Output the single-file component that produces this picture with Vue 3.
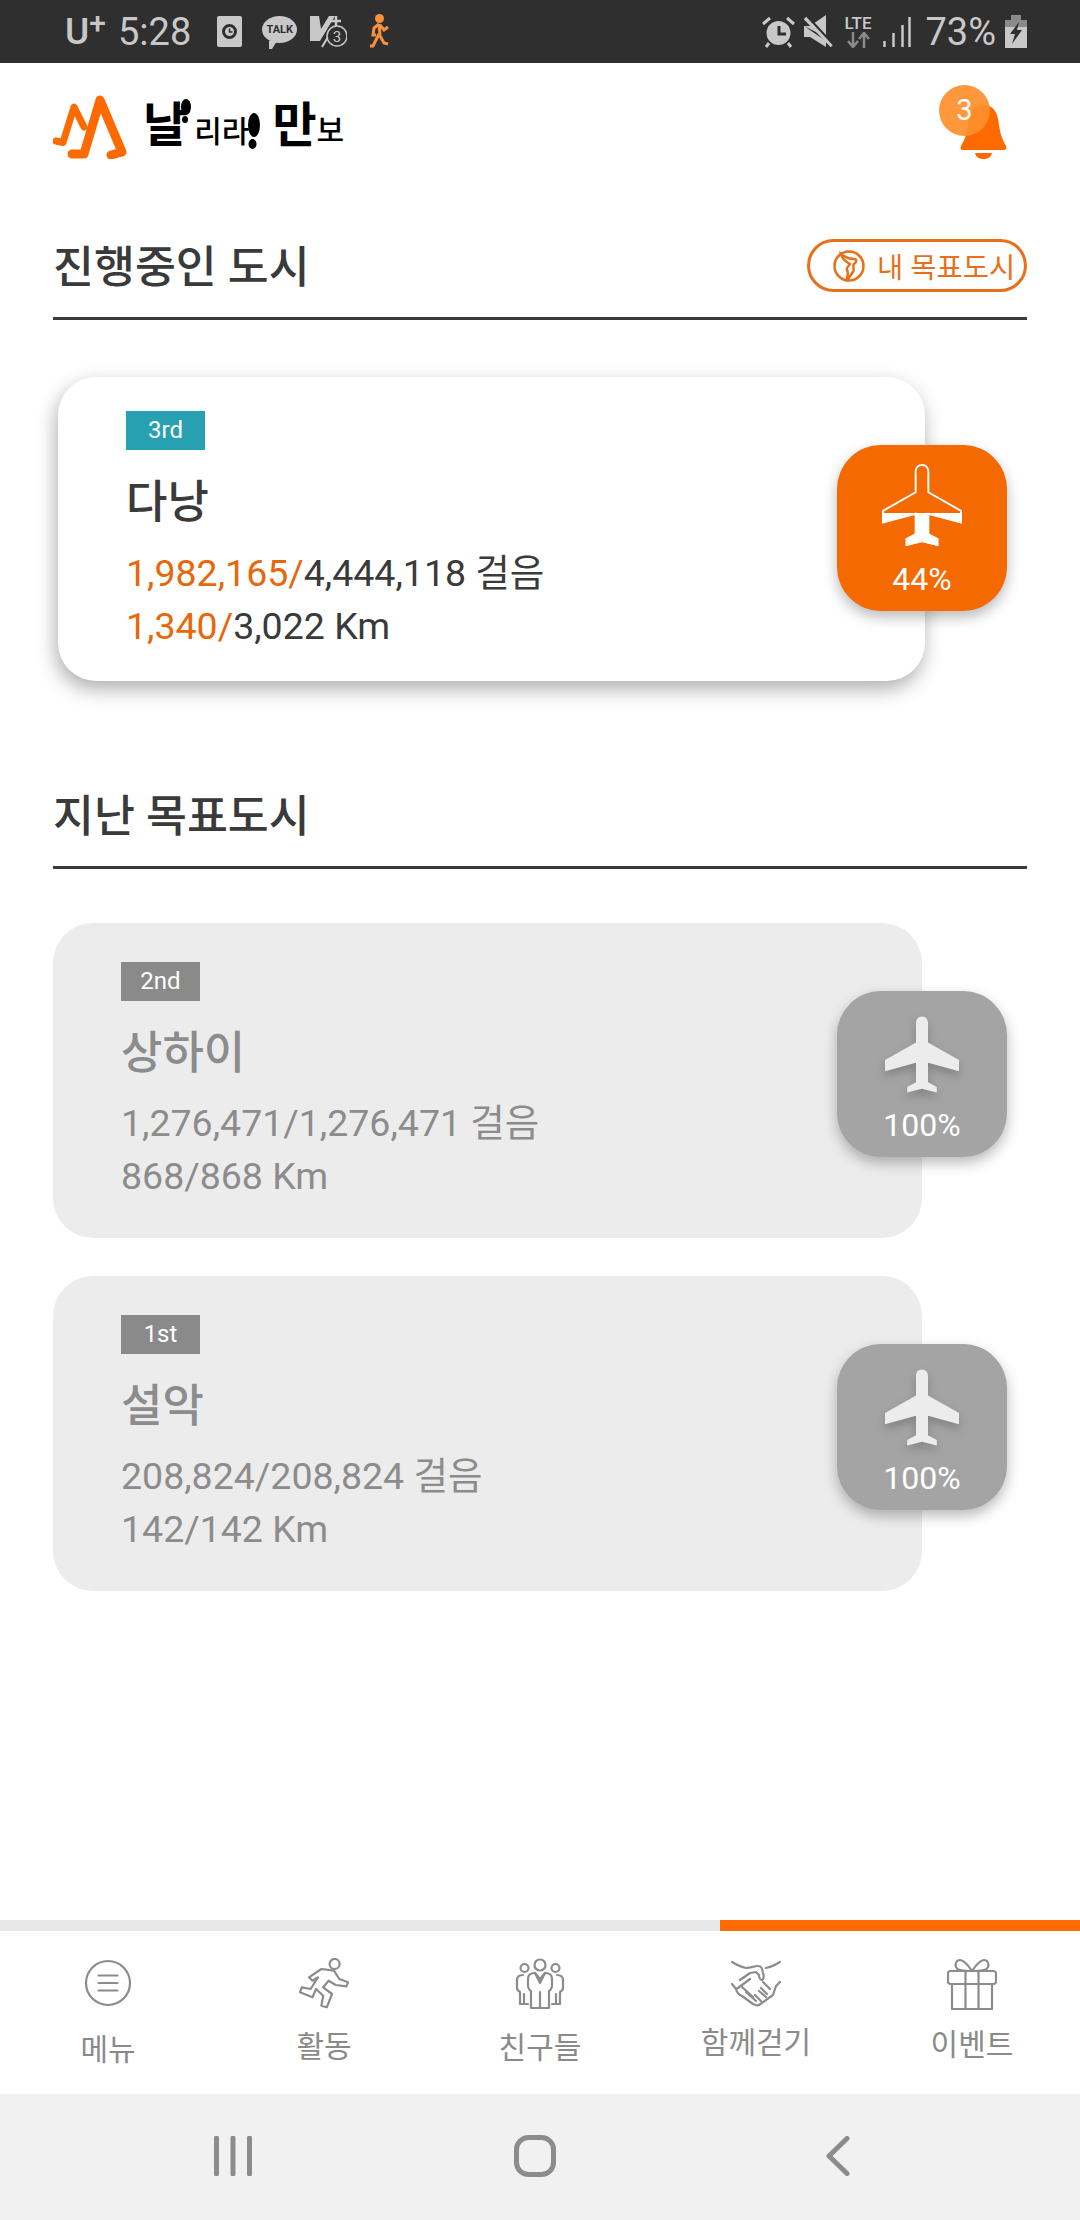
<template>
  <div class="page">
    <div class="status-bar">
      <div class="status-group">
        <span class="carrier">U<sup>+</sup></span>
        <span class="clock">5:28</span>
        <svg class="st-clock" width="25" height="31" viewBox="0 0 25 31">
          <rect width="25" height="31" rx="2" fill="#c8c8c8" />
          <circle cx="12.5" cy="15.5" r="6" fill="none" stroke="#2f2f2f" stroke-width="3" />
          <path d="M12.5 12.5v3.5h3" fill="none" stroke="#2f2f2f" stroke-width="1.5" />
        </svg>
        <span class="talk">TALK</span>
        <svg class="st-v" width="37" height="33" viewBox="0 0 37 33">
          <path d="M0 1h9l2 13L19 1h6L10 26H0z" fill="#c8c8c8" />
          <path d="M26 1v10M21 6h10" stroke="#c8c8c8" stroke-width="2.5" />
          <path d="M12 32l6-10h6" fill="none" stroke="#c8c8c8" stroke-width="2" />
          <circle cx="27" cy="21" r="10" fill="#2f2f2f" stroke="#c8c8c8" stroke-width="1.5" />
          <text x="27" y="26.5" text-anchor="middle" class="st-v-num">3</text>
        </svg>
        <svg class="st-walker" width="19" height="35" viewBox="0 0 19 35">
          <circle cx="9.5" cy="4.5" r="4.5" fill="#f7913a" />
          <path d="M9 10L4 14l-1 7 3 0M9 10l1 11M10 11l4 5 4-3M9 20l-6 12H0M9 20l5 9 4 1" fill="none" stroke="#f7913a" stroke-width="3" />
        </svg>
      </div>
      <div class="status-group">
        <svg class="st-alarm" width="33" height="32" viewBox="0 0 33 32">
          <circle cx="16.5" cy="17" r="12" fill="#c8c8c8" />
          <path d="M17 10v8h7" fill="none" stroke="#2f2f2f" stroke-width="3" />
          <path d="M1 8l7-6M32 8l-7-6M7 27l-3 4M26 27l3 4" stroke="#c8c8c8" stroke-width="3" />
        </svg>
        <svg class="st-mute" width="29" height="33" viewBox="0 0 29 33">
          <path d="M0 11h6L22 0v22z M0 11v11h6l16 10v-6z" fill="#c8c8c8" />
          <path d="M1 3l27 28" stroke="#c8c8c8" stroke-width="3.5" />
          <path d="M4 2l26 28" stroke="#2f2f2f" stroke-width="2" />
        </svg>
        <div class="st-lte">
          <span>LTE</span>
          <svg width="24" height="16" viewBox="0 0 24 16">
            <path d="M7 0v14M2 9l5 6 5-6" fill="none" stroke="#8a8a8a" stroke-width="2.5" />
            <path d="M18 16V2M13 7l5-6 5 6" fill="none" stroke="#8a8a8a" stroke-width="2.5" />
          </svg>
        </div>
        <svg class="st-signal" width="28" height="30" viewBox="0 0 28 30">
          <path d="M1.5 24v6M10.500 16v14M19.500 8v22M26.500 0v30" stroke="#c8c8c8" stroke-width="2.500" />
        </svg>
        <span class="battery-text">73%</span>
        <svg class="st-battery" width="22" height="33" viewBox="0 0 22 33">
          <path d="M6 0h10v5H6z" fill="#8a8a8a" />
          <path d="M0 5h22v7H0z" fill="#8a8a8a" />
          <path d="M0 12h22v21H0z" fill="#c8c8c8" />
          <path d="M14 7L5 19h5l-3 10 10-14h-5z" fill="#2f2f2f" />
        </svg>
      </div>
    </div>

    <div class="app-header">
      <div class="logo">
        <svg class="logo-mark" width="74" height="66" viewBox="0 0 74 66">
          <path d="M3 48l7 1.500L21 14l10 20" fill="none" stroke="#ff6a00" stroke-width="7" stroke-linecap="round" stroke-linejoin="round" />
          <path d="M19 61h12L47 7l22 52-11 3" fill="none" stroke="#ff6a00" stroke-width="9" stroke-linecap="round" stroke-linejoin="round" />
        </svg>
        <span class="lg-big">날</span>
        <svg class="lg-foot foot-a" width="11" height="24" viewBox="0 0 11 24">
          <ellipse cx="6" cy="8" rx="5" ry="8" />
          <ellipse cx="5" cy="20.500" rx="3" ry="3.500" />
        </svg>
        <span class="lg-small">리라</span>
        <svg class="lg-foot foot-b" width="13" height="36" viewBox="0 0 13 36">
          <ellipse cx="7" cy="12" rx="6" ry="12" />
          <ellipse cx="5.500" cy="31" rx="4" ry="5" />
        </svg>
        <span class="lg-big lg-man">만</span>
        <span class="lg-small lg-bo">보</span>
      </div>
      <div class="bell">
        <svg width="47" height="54" viewBox="0 0 47 54">
          <path d="M23.500 0C35 0 38 10 39 20c1 8 3 14 7 21 1 3 0 4-2 4H3c-2 0-3-1-2-4 4-7 6-13 7-21C9 10 12 0 23.500 0z" fill="#ff6a00" />
          <path d="M15 48h17c-1 4-4 6-8.500 6S16 52 15 48z" fill="#ff6a00" />
        </svg>
        <span class="bell-count">3</span>
      </div>
    </div>

    <div class="main">
      <div class="section-head">
        <h2>진행중인 도시</h2>
        <div class="goal-btn">
          <svg width="32" height="32" viewBox="0 0 32 32">
            <circle cx="16" cy="16" r="14.500" fill="none" stroke="#e8701a" stroke-width="2.500" />
            <path d="M8 4c4 3 8 5 13 5 3 0 3 3 0 5-2 2 1 5-1 8-2 2-3 5-6 8 0-4 2-7 0-10-1-3 2-4 3-6-3-2-7-3-9-10z" fill="none" stroke="#e8701a" stroke-width="2.500" />
          </svg>
          <span>내 목표도시</span>
        </div>
      </div>

      <div class="card card-active">
        <div class="rank rank-teal">3rd</div>
        <div class="city">다낭</div>
        <div class="stat"><em>1,982,165/</em>4,444,118 걸음</div>
        <div class="stat"><em>1,340/</em>3,022 Km</div>
        <div class="plane-box plane-orange">
          <svg width="80" height="83" viewBox="0 0 80 83">
            <defs>
              <clipPath id="plane-fill"><rect x="0" y="49" width="80" height="34" /></clipPath>
            </defs>
            <path :d="planePath" fill="none" stroke="#fff" stroke-width="2" transform="translate(1 1) scale(.975)" />
            <path :d="planePath" fill="#fff" clip-path="url(#plane-fill)" />
          </svg>
          <span>44%</span>
        </div>
      </div>

      <div class="section-head section-past">
        <h2>지난 목표도시</h2>
      </div>

      <div class="past-list">
        <div v-for="item in pastCities" :key="item.rank" class="card card-past">
          <div class="rank rank-gray">{{ item.rank }}</div>
          <div class="city">{{ item.name }}</div>
          <div class="stat">{{ item.steps }} 걸음</div>
          <div class="stat">{{ item.km }} Km</div>
          <div class="plane-box plane-gray">
            <svg width="74" height="78" viewBox="0 0 80 83">
              <path :d="planePath" fill="#ececec" />
            </svg>
            <span>100%</span>
          </div>
        </div>
      </div>
    </div>

    <div class="progress">
      <div class="progress-fill"></div>
    </div>

    <div class="tabs">
      <div class="tab tab-menu">
        <svg width="50" height="52" viewBox="0 0 50 52">
          <circle cx="25" cy="25" r="22" />
          <path d="M15.500 17.500h19M15.500 25h19M15.500 32.500h19" />
        </svg>
        <span>메뉴</span>
      </div>
      <div class="tab tab-act">
        <svg width="50" height="52" viewBox="0 0 50 52">
          <circle cx="35.600" cy="6" r="5" />
          <path d="M10 19.300L22.400 11 35 12.700 40.300 21 49 24.300 47.400 28.300 36.700 27 29.600 22.700 24.200 29.300 33 36 27.800 49.300 22.400 47.700 24.200 37.700 17 31 13.500 39.300 1 34.300 2.800 29.300 11.700 31 18.900 19.300 13.500 22.700z" />
        </svg>
        <span>활동</span>
      </div>
      <div class="tab tab-friends">
        <svg width="50" height="52" viewBox="0 0 50 52">
          <circle cx="25" cy="7" r="5.500" />
          <circle cx="9.500" cy="10" r="4" />
          <circle cx="40.500" cy="10" r="4" />
          <path d="M16 50V33c-2-1-3-3-3-6v-6c0-4 3-6 7-6l5 6 5-6c4 0 7 2 7 6v6c0 3-1 5-3 6v17z" />
          <path d="M25 34v16M20 15l5 10 5-10" />
          <path d="M8 17c-4 0-6 2-6 5v8c0 2 1 3 3 4v12h8M42 17c4 0 6 2 6 5v8c0 2-1 3-3 4v12h-8M9 36v10M41 36v10" />
        </svg>
        <span>친구들</span>
      </div>
      <div class="tab tab-walk">
        <svg width="50" height="52" viewBox="0 0 50 52">
          <path d="M1 4c5 3 9 5 14 6 5 0 8-2 12-2 4 0 4 3 5 7 1 2 1 6-1 7-2 0-3-3-3-5l-3-3-6 1-10 7" />
          <path d="M49 4c-5 3-9 5-14 6" />
          <path d="M1 26l4 5 2-1 12-9M5 31c1 4 3 6 6 7l11 8c2 1 4 2 6 1l14-10 3-9 4-4" />
          <path d="M10 28l12 11M15 34l10 9M32 24l7 7M28 33l7 6M24 37l6 6M30 30l6 6" />
        </svg>
        <span>함께걷기</span>
      </div>
      <div class="tab tab-event">
        <svg width="50" height="52" viewBox="0 0 50 52">
          <path d="M25 13C21 7 17 2 13 2 9 2 8 6 9 9c1 3 4 4 16 4zM25 13c4-6 8-11 12-11 4 0 5 4 4 7-1 3-4 4-16 4z" />
          <rect x="1" y="13" width="48" height="13" rx="2.500" />
          <path d="M5 26v25h40V26M18.500 13v38M31.500 13v38" />
        </svg>
        <span>이벤트</span>
      </div>
    </div>

    <div class="nav-bar">
      <svg width="38" height="40" viewBox="0 0 38 40">
        <path d="M2.500 2v36M19 2v36M35.500 2v36" stroke="#8c8c8c" stroke-width="5" stroke-linecap="round" />
      </svg>
      <svg width="42" height="42" viewBox="0 0 42 42">
        <rect x="2.500" y="2.500" width="37" height="37" rx="12" fill="none" stroke="#8c8c8c" stroke-width="5" />
      </svg>
      <svg width="24" height="40" viewBox="0 0 24 40">
        <path d="M21 2.500L3 20l18 17.500" fill="none" stroke="#8c8c8c" stroke-width="5" stroke-linecap="round" stroke-linejoin="round" />
      </svg>
    </div>
  </div>
</template>

<script setup>
const planePath =
  'M40 0C36 0 33.500 3 33.500 7V28L0 47V59L33.500 50V71L24 76V82L40 78L56 82V76L46.500 71V50L80 59V47L46.500 28V7C46.500 3 44 0 40 0Z';

const pastCities = [
  { rank: '2nd', name: '상하이', steps: '1,276,471/1,276,471', km: '868/868' },
  { rank: '1st', name: '설악', steps: '208,824/208,824', km: '142/142' },
];
</script>

<style>
html,
body {
  margin: 0;
  background: #fff;
}
</style>

<style scoped>
.page {
  width: 1080px;
  height: 2220px;
  display: flex;
  flex-direction: column;
  overflow: hidden;
  background: #fff;
  font-family: Roboto, 'Noto Sans CJK KR', sans-serif;
  color: #3a3a3a;
}

.status-bar {
  height: 63px;
  flex: none;
  box-sizing: border-box;
  padding: 0 53px 0 65px;
  display: flex;
  align-items: center;
  justify-content: space-between;
  background: #2f2f2f;
  color: #c8c8c8;
}

.status-group {
  display: flex;
  align-items: center;
}

.carrier {
  font-size: 37px;
  line-height: 63px;
  width: 53px;
  font-weight: 500;
}

.carrier sup {
  font-size: 30px;
  line-height: 0;
  font-weight: 500;
  vertical-align: 11px;
}

.clock {
  font-size: 38px;
  margin-right: 26px;
}

.talk {
  position: relative;
  width: 35px;
  height: 27px;
  margin: -4px 13px 0 20px;
  border-radius: 50%;
  background: #c8c8c8;
  color: #2f2f2f;
  font-size: 11px;
  font-weight: 700;
  line-height: 27px;
  text-align: center;
}

.talk::after {
  content: '';
  position: absolute;
  left: 7px;
  bottom: -6px;
  border-left: 3px solid #c8c8c8;
  border-right: 5px solid transparent;
  border-top: 8px solid #c8c8c8;
}

.st-walker {
  margin-left: 23px;
}

.st-mute {
  margin-left: 9px;
}

.st-lte {
  margin-left: 9px;
  width: 31px;
  display: flex;
  flex-direction: column;
  align-items: center;
  font-size: 17px;
  font-weight: 500;
  line-height: 17px;
}

.st-signal {
  margin-left: 10px;
}

.battery-text {
  margin-left: 14px;
  font-size: 38px;
}

.st-battery {
  margin-left: 9px;
}

.st-v-num {
  font-size: 15px;
  fill: #c8c8c8;
}

.app-header {
  height: 112px;
  flex: none;
  box-sizing: border-box;
  padding: 0 73px 0 53px;
  display: flex;
  align-items: center;
  justify-content: space-between;
}

.logo {
  display: flex;
  align-items: center;
  color: #000;
  margin-top: 13px;
}

.logo-mark {
  margin-right: 16px;
}

.lg-big {
  font-size: 48px;
  font-weight: 700;
  line-height: 50px;
}

.lg-small {
  font-size: 30px;
  font-weight: 500;
  line-height: 40px;
  margin-top: 12px;
}

.lg-foot {
  fill: #000;
}

.foot-a {
  margin: -30px 3px 0 -7px;
}

.foot-b {
  margin: 10px 12px 0 -2px;
}

.lg-bo {
  margin-top: 10px;
}

.bell {
  position: relative;
  margin-top: 26px;
  width: 47px;
  height: 54px;
}

.bell-count {
  position: absolute;
  left: -21px;
  top: -20px;
  width: 51px;
  height: 51px;
  border-radius: 50%;
  background: rgba(255, 143, 44, 0.92);
  color: #fff;
  font-size: 29px;
  line-height: 51px;
  text-align: center;
}

.main {
  flex: 1;
  padding: 0 53px;
}

.section-head {
  margin-top: 64px;
  height: 53px;
  padding-bottom: 25px;
  border-bottom: 3px solid #3a3a3a;
  display: flex;
  align-items: center;
  justify-content: space-between;
}

.section-head h2 {
  margin: 0 0 5px;
  font-size: 44.500px;
  font-weight: 500;
  color: #3a3a3a;
}

.section-past {
  margin-top: 107px;
}

.goal-btn {
  box-sizing: border-box;
  width: 220px;
  height: 53px;
  border: 3px solid #e8701a;
  border-radius: 27px;
  padding-left: 23px;
  display: flex;
  align-items: center;
  gap: 12px;
  color: #e8701a;
  font-size: 28.500px;
  white-space: nowrap;
}

.card {
  position: relative;
  box-sizing: border-box;
  padding-left: 68px;
}

.card-active {
  width: 867px;
  height: 304px;
  margin: 57px 0 0 5px;
  padding-top: 34px;
  border-radius: 38px;
  background: #fff;
  box-shadow: -2px 8px 20px rgba(0, 0, 0, 0.32);
}

.past-list {
  margin-top: 54px;
  display: flex;
  flex-direction: column;
  gap: 38px;
}

.card-past {
  width: 869px;
  height: 315px;
  padding-top: 39px;
  border-radius: 40px;
  background: #ececec;
  color: #8c8c8c;
}

.rank {
  width: 79px;
  height: 39px;
  color: #fff;
  font-size: 24px;
  line-height: 39px;
  text-align: center;
}

.rank-teal {
  background: #27a1b2;
}

.rank-gray {
  background: #8a8a8a;
}

.city {
  margin-top: 23px;
  font-size: 45px;
  font-weight: 500;
  line-height: 60px;
}

.card-past .city {
  margin-top: 23px;
}

.stat {
  font-size: 37.500px;
  line-height: 53px;
  white-space: nowrap;
}

.city + .stat {
  margin-top: 14px;
}

.card-past .city + .stat {
  margin-top: 13px;
}

.stat em {
  font-style: normal;
  color: #e8670c;
}

.plane-box {
  position: absolute;
  top: 68px;
  width: 170px;
  height: 166px;
  border-radius: 44px;
  display: flex;
  flex-direction: column;
  align-items: center;
  color: #fff;
  font-size: 32px;
  line-height: 40px;
}

.plane-orange {
  left: 779px;
  padding-top: 19px;
  box-sizing: border-box;
  background: #f46900;
  box-shadow: 0 6px 14px rgba(0, 0, 0, 0.28);
}

.plane-orange span {
  margin-top: 12px;
}

.plane-gray {
  left: 784px;
  padding-top: 25px;
  box-sizing: border-box;
  background: #a4a4a4;
  box-shadow: 0 6px 14px rgba(0, 0, 0, 0.28);
}

.plane-gray svg {
  filter: drop-shadow(0 5px 5px rgba(0, 0, 0, 0.2));
}

.plane-gray span {
  margin-top: 11px;
}

.progress {
  height: 11px;
  flex: none;
  background: #e8e8e8;
  display: flex;
  justify-content: flex-end;
}

.progress-fill {
  width: 360px;
  background: #ff6a00;
}

.tabs {
  height: 163px;
  flex: none;
  display: grid;
  grid-template-columns: repeat(5, 216px);
  background: #fff;
  color: #8a8a8a;
  font-size: 30px;
}

.tab {
  padding-top: 27px;
  display: flex;
  flex-direction: column;
  align-items: center;
}

.tab svg {
  fill: none;
  stroke: #8c8c8c;
  stroke-width: 2.200;
  stroke-linejoin: round;
  stroke-linecap: round;
}

.tab span {
  line-height: 40px;
}

.tab-menu span {
  margin-top: 20px;
}

.tab-act span {
  margin-top: 17px;
}

.tab-friends span {
  margin-top: 18px;
}

.tab-walk span {
  margin-top: 13px;
}

.tab-event span {
  margin-top: 15px;
}

.nav-bar {
  height: 126px;
  flex: none;
  background: #f1f1f1;
  display: grid;
  grid-template-columns: 466px 42px 1fr;
  align-items: center;
  justify-items: start;
  padding-bottom: 2px;
  box-sizing: border-box;
}

.nav-bar svg:nth-child(1) {
  margin-left: 214px;
}

.nav-bar svg:nth-child(2) {
  margin-left: 48px;
}

.nav-bar svg:nth-child(3) {
  margin-left: 318px;
}
</style>
